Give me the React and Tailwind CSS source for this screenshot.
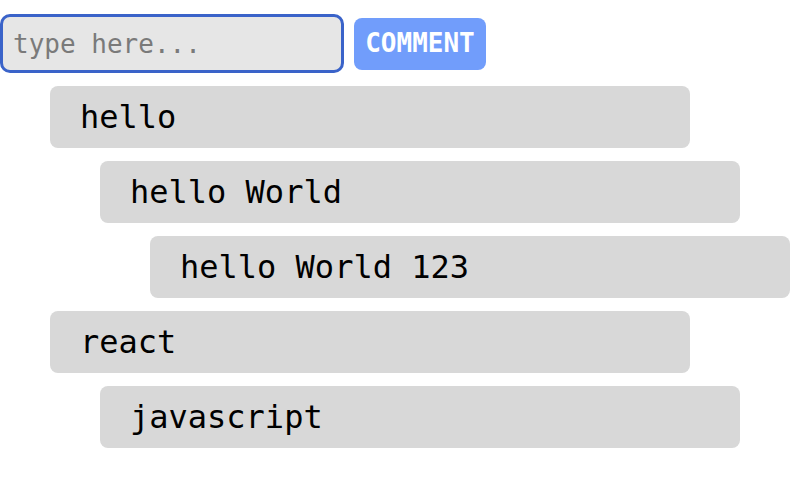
import React, { useState } from 'react';

const comments = [
  { text: 'hello', depth: 0 },
  { text: 'hello World', depth: 1 },
  { text: 'hello World 123', depth: 2 },
  { text: 'react', depth: 0 },
  { text: 'javascript', depth: 1 },
];

const indent = ['ml-[50px]', 'ml-[100px]', 'ml-[150px]'];

export default function App() {
  const [value, setValue] = useState('');

  return (
    <div className="pt-[14px] font-['DejaVu_Sans_Mono',monospace] bg-white min-h-screen">
      <div className="flex items-center gap-[10px]">
        <input
          type="text"
          value={value}
          autoFocus
          onChange={(e) => setValue(e.target.value)}
          placeholder="type here..."
          className="w-[344px] h-[59px] px-[10px] rounded-[10px] bg-[#e6e6e6] border-[3px] border-[#3a63c9] text-[26px] text-black placeholder-[#7a7a7a] outline-none"
        />
        <button className="w-[132px] h-[52px] rounded-[8px] bg-[#719dfb] text-white text-[26px] font-bold">
          COMMENT
        </button>
      </div>

      <div className="flex flex-col gap-[13px] mt-[13px]">
        {comments.map((c, i) => (
          <div
            key={i}
            className={`${indent[c.depth]} w-[640px] h-[62px] rounded-[8px] bg-[#d8d8d8] px-[30px] flex items-center text-[32px] text-black`}
          >
            {c.text}
          </div>
        ))}
      </div>
    </div>
  );
}
